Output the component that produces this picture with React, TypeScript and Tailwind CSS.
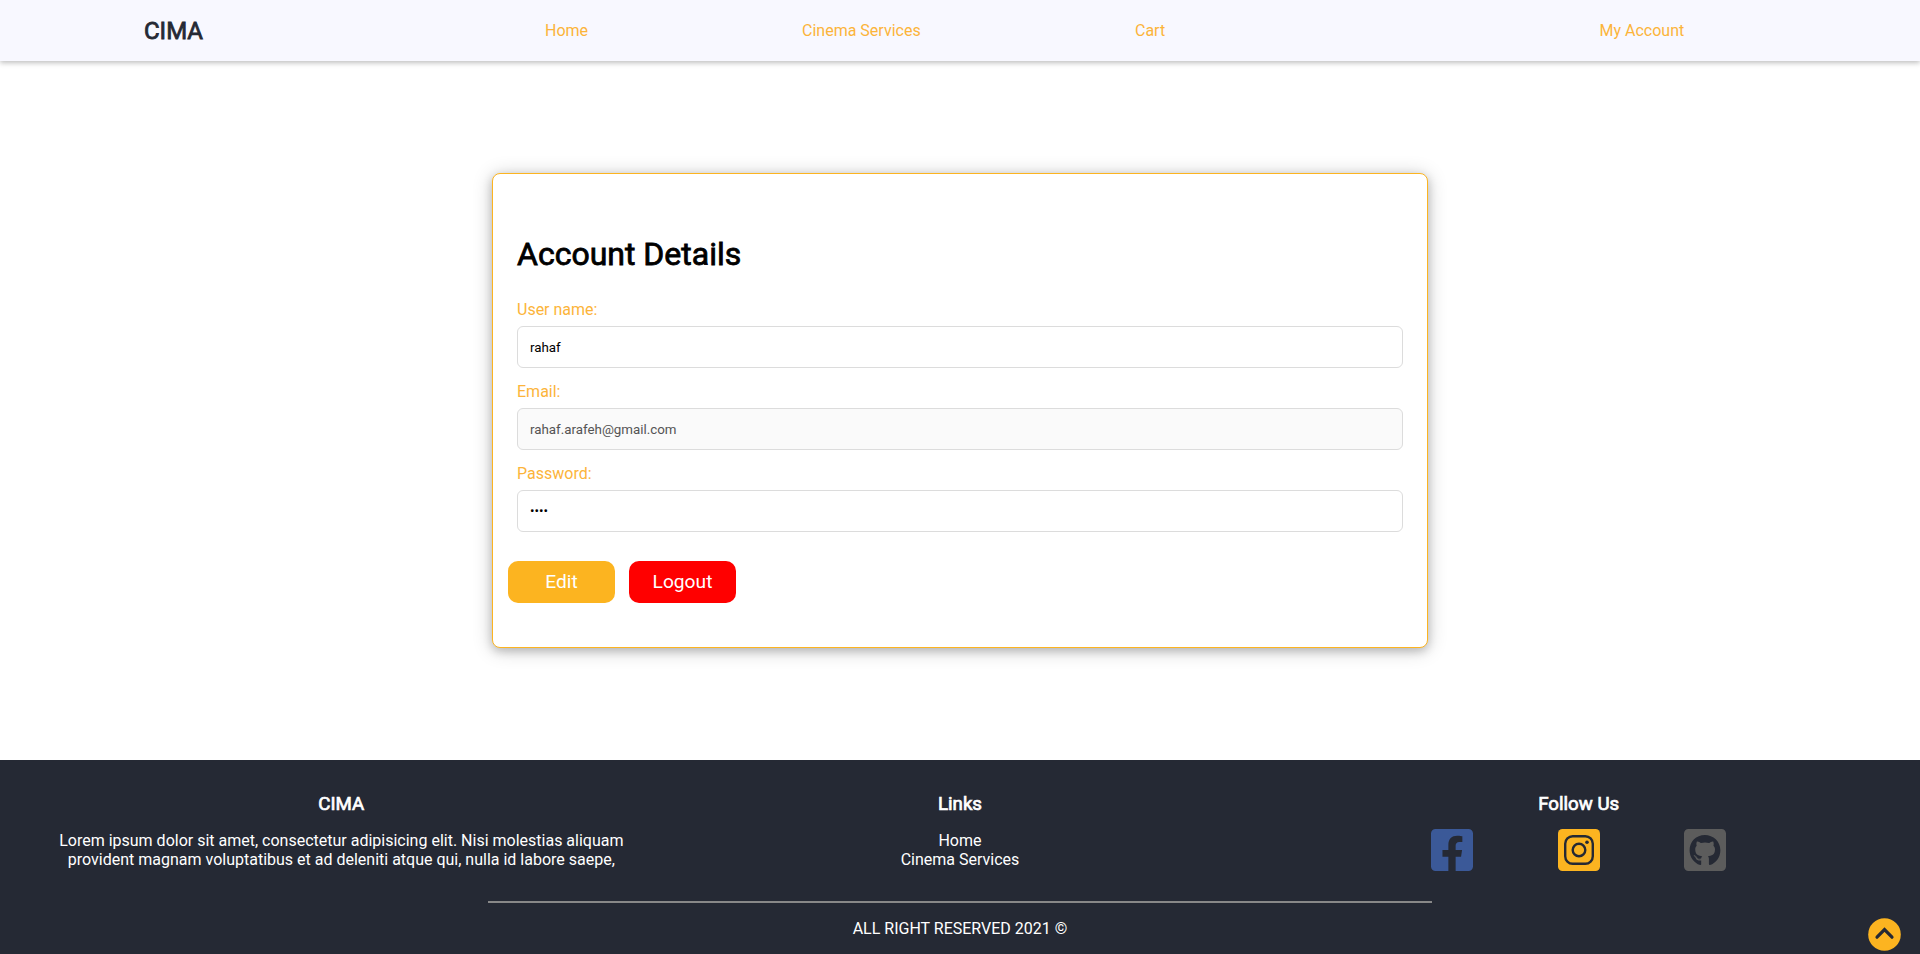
import type { ReactNode } from "react";
import { FaFacebookSquare, FaGithubSquare } from "react-icons/fa";

function InstagramIcon() {
  return (
    <svg viewBox="0 0 42 42" className="h-12 w-[42px] text-[#fcb420]">
      <rect width="42" height="42" rx="4.5" fill="currentColor" />
      <g fill="none" stroke="#252934" strokeWidth="2.4">
        <rect x="7.2" y="7.2" width="27.6" height="27.6" rx="7.5" />
        <circle cx="21" cy="21" r="6.3" />
      </g>
      <circle cx="29" cy="13.2" r="1.8" fill="#252934" />
    </svg>
  );
}

function ArrowUpIcon() {
  return (
    <svg viewBox="0 0 33 33" className="size-[33px]">
      <circle cx="16.5" cy="16.5" r="16.3" fill="#fcb420" />
      <path d="M9 19.2 16.5 11.6 24 19.2" fill="none" stroke="#252934" strokeWidth="3.2" strokeLinecap="round" />
    </svg>
  );
}

function Header() {
  return (
    <header className="relative z-10 h-[61px] bg-[#f8f8ff] shadow-[0_2px_5px_rgba(0,0,0,0.25)]">
      <nav className="grid h-full grid-cols-[401px_257px_333px_464.5px_1fr] items-center pl-36 text-[#fcb43a]">
        <span className="text-2xl font-normal text-[#252934] [-webkit-text-stroke:0.8px]">CIMA</span>
        <a href="#">Home</a>
        <a href="#">Cinema Services</a>
        <a href="#">Cart</a>
        <a href="#">My Account</a>
      </nav>
    </header>
  );
}

type FieldProps = { label: string; value: string; type: string; disabled?: boolean };

function Field({ label, value, type, disabled }: FieldProps) {
  return (
    <label className="mb-[14px] block">
      <span className="block pb-[7px] leading-[19px] text-[#fcb43a]">{label}</span>
      <input
        type={type}
        defaultValue={value}
        disabled={disabled}
        className="block h-[42px] w-full rounded-md border border-[#dcdcdc] bg-white px-3 text-[13.333px] text-black disabled:bg-[#fafafa] disabled:text-[#545454] [&[type=password]]:pb-0.5"
      />
    </label>
  );
}

function AccountCard() {
  return (
    <section className="h-[475px] w-[936px] rounded-lg border border-[#fcb420] bg-white px-6 pt-[61px] shadow-[0_3px_10px_rgba(0,0,0,0.2),0_2px_20px_rgba(0,0,0,0.2)]">
      <h1 className="mb-[27px] text-[32px] leading-[38px] text-black [-webkit-text-stroke:0.8px]">Account Details</h1>
      <Field label="User name:" value="rahaf" type="text" />
      <Field label="Email:" value="rahaf.arafeh@gmail.com" type="email" disabled />
      <Field label="Password:" value="1234" type="password" />
      <div className="-ml-[9px] flex gap-[14px] pt-[14.5px] text-[19.2px] text-white">
        <button className="h-[42.5px] w-[107px] rounded-[10px] bg-[#fcb420] pt-px">Edit</button>
        <button className="h-[42.5px] w-[107px] rounded-[10px] bg-[#ff0000] pt-px">Logout</button>
      </div>
    </section>
  );
}

function FooterColumn({ title, children }: { title: string; children: ReactNode }) {
  return (
    <div className="flex flex-col items-center">
      <h3 className="text-[18.72px] leading-[22px] [-webkit-text-stroke:0.7px]">{title}</h3>
      {children}
    </div>
  );
}

function Footer() {
  return (
    <footer className="relative h-[194px] bg-[#252934] px-8 pt-[33px] text-center leading-[19px] text-white">
      <div className="grid h-[108px] grid-cols-3">
        <FooterColumn title="CIMA">
          <p className="mt-4 w-[570px]">
            Lorem ipsum dolor sit amet, consectetur adipisicing elit. Nisi molestias aliquam provident magnam
            voluptatibus et ad deleniti atque qui, nulla id labore saepe,
          </p>
        </FooterColumn>
        <FooterColumn title="Links">
          <div className="mt-4 flex flex-col">
            <a href="#">Home</a>
            <a href="#">Cinema Services</a>
          </div>
        </FooterColumn>
        <FooterColumn title="Follow Us">
          <div className="mt-[11px] flex gap-[84.5px]">
            <FaFacebookSquare className="h-12 w-[42px] text-[#3b5998]" />
            <InstagramIcon />
            <FaGithubSquare className="h-12 w-[42px] text-[#5c5c5c]" />
          </div>
        </FooterColumn>
      </div>
      <hr className="mx-auto w-[944px] border-0 border-t-2 border-[#888888]" />
      <p className="pt-4">ALL RIGHT RESERVED 2021 ©</p>
      <button className="absolute right-[19px] bottom-[3.5px]">
        <ArrowUpIcon />
      </button>
    </footer>
  );
}

export default function App() {
  return (
    <div className="flex h-[954px] flex-col overflow-hidden bg-white font-[Roboto,sans-serif] text-base">
      <Header />
      <main className="flex flex-1 justify-center pt-28">
        <AccountCard />
      </main>
      <Footer />
    </div>
  );
}
